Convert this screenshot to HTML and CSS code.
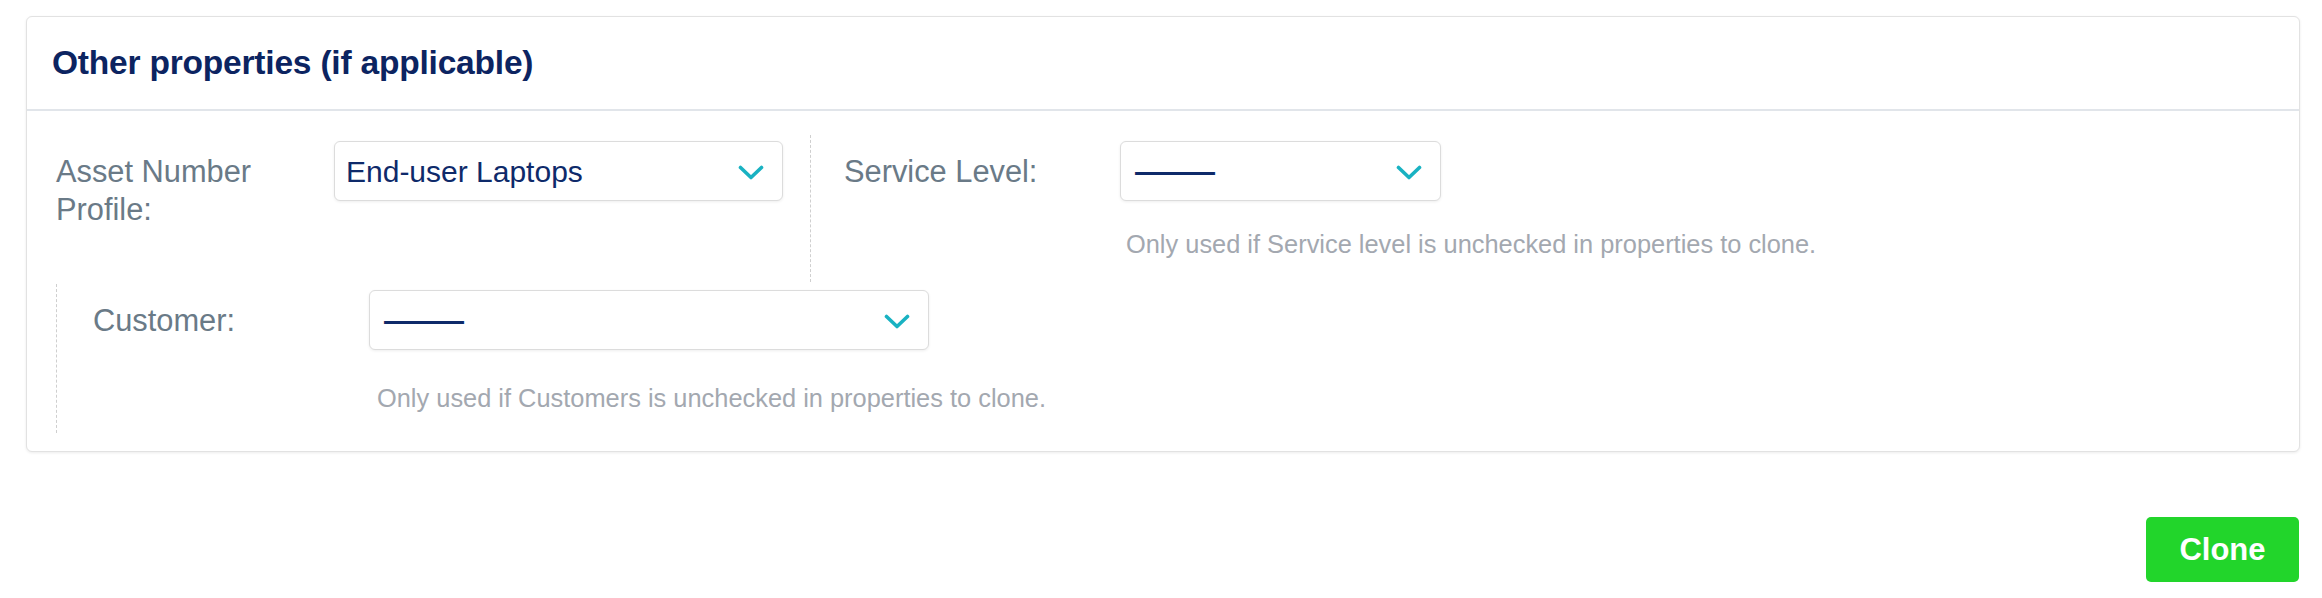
FILE: index.html
```html
<!DOCTYPE html>
<html>
<head>
<meta charset="utf-8">
<title>Other properties</title>
<link rel="stylesheet" href="styles.css">
</head>
<body>
<div class="card">
  <div class="card-header">
    <h2 class="card-title">Other properties (if applicable)</h2>
  </div>
  <div class="card-body">
    <div class="row">
      <div class="group group-first">
        <div class="label">Asset Number<br>Profile:</div>
        <div class="field">
          <div class="select select-asset">
            <span class="value">End-user Laptops</span>
            <svg class="chev" width="26" height="15" viewBox="0 0 26 15"><polyline points="2.5,2.5 13,12.5 23.5,2.5" fill="none" stroke="#19b2c2" stroke-width="3.6" stroke-linecap="round" stroke-linejoin="round"/></svg>
          </div>
        </div>
      </div>
      <div class="group group-second">
        <div class="label">Service Level:</div>
        <div class="field">
          <div class="select select-service">
            <span class="value empty">———</span>
            <svg class="chev" width="26" height="15" viewBox="0 0 26 15"><polyline points="2.5,2.5 13,12.5 23.5,2.5" fill="none" stroke="#19b2c2" stroke-width="3.6" stroke-linecap="round" stroke-linejoin="round"/></svg>
          </div>
          <div class="help help-service">Only used if Service level is unchecked in properties to clone.</div>
        </div>
      </div>
    </div>
    <div class="row row-two">
      <div class="group group-third">
        <div class="label">Customer:</div>
        <div class="field">
          <div class="select select-customer">
            <span class="value empty">———</span>
            <svg class="chev" width="26" height="15" viewBox="0 0 26 15"><polyline points="2.5,2.5 13,12.5 23.5,2.5" fill="none" stroke="#19b2c2" stroke-width="3.6" stroke-linecap="round" stroke-linejoin="round"/></svg>
          </div>
          <div class="help help-customer">Only used if Customers is unchecked in properties to clone.</div>
        </div>
      </div>
    </div>
  </div>
</div>
<div class="actions">
  <button class="btn-clone" type="button">Clone</button>
</div>
</body>
</html>
```

FILE: styles.css
```css
html, body {
  margin: 0;
  background: #ffffff;
}

body {
  padding: 16px 22px 0 26px;
  font-family: "Liberation Sans", Arial, sans-serif;
}

.card {
  border: 1px solid #e2e2e2;
  border-radius: 6px;
  box-shadow: 0 1px 3px rgba(0, 0, 0, 0.08);
  background: #fff;
}

.card-header {
  height: 92px;
  display: flex;
  align-items: center;
  padding-left: 25px;
  border-bottom: 2px solid #e1e5ea;
}

.card-title {
  margin: 0;
  font-family: "Liberation Sans", Arial, sans-serif;
  font-weight: 700;
  font-size: 33.5px;
  color: #0c2461;
  letter-spacing: -0.2px;
}

.card-body {
  padding: 24px 0 18px 29px;
}

.row {
  display: flex;
}

.row-two {
  margin-top: 2px;
}

.group {
  display: flex;
  align-items: flex-start;
}

.group-first {
  padding: 6px 27px 0 0;
  border-right: 1px dashed #cfcfcf;
}

.group-second {
  padding: 6px 0 23px 33px;
}

.group-third {
  padding: 6px 0 20px 36px;
  border-left: 1px dashed #cfcfcf;
}

.label {
  width: 276px;
  padding-top: 12px;
  font-size: 30.8px;
  line-height: 38px;
  color: #6a7a87;
}

.group-first .label {
  width: 278px;
}

.field {
  display: flex;
  flex-direction: column;
}

.select {
  box-sizing: border-box;
  height: 60px;
  display: flex;
  align-items: center;
  justify-content: space-between;
  padding: 2px 18px 0 11px;
  border: 1px solid #dcdcdc;
  border-radius: 6px;
  box-shadow: 0 1px 3px rgba(0, 0, 0, 0.07);
  background: #fff;
}

.select-asset { width: 449px; }
.select-service { width: 321px; }
.select-customer { width: 560px; }

.value {
  font-size: 30px;
  line-height: 38px;
  color: #0e2a6a;
}

.value.empty {
  padding-left: 3px;
  letter-spacing: -5px;
  font-weight: 700;
}

.chev {
  display: block;
  flex: none;
}

.help {
  margin-left: 6px;
  font-size: 25.4px;
  line-height: 30px;
  color: #a3a8b0;
  white-space: nowrap;
}

.help-service {
  margin-top: 28px;
}

.help-customer {
  margin-top: 33px;
  margin-left: 8px;
}

.actions {
  display: flex;
  justify-content: flex-end;
  margin-top: 65px;
  padding-right: 1px;
}

.btn-clone {
  width: 153px;
  height: 65px;
  border: none;
  border-radius: 5px;
  background: #22d52b;
  color: #fff;
  font-family: "Liberation Sans", Arial, sans-serif;
  font-weight: 700;
  font-size: 31px;
  padding: 0;
}
```
